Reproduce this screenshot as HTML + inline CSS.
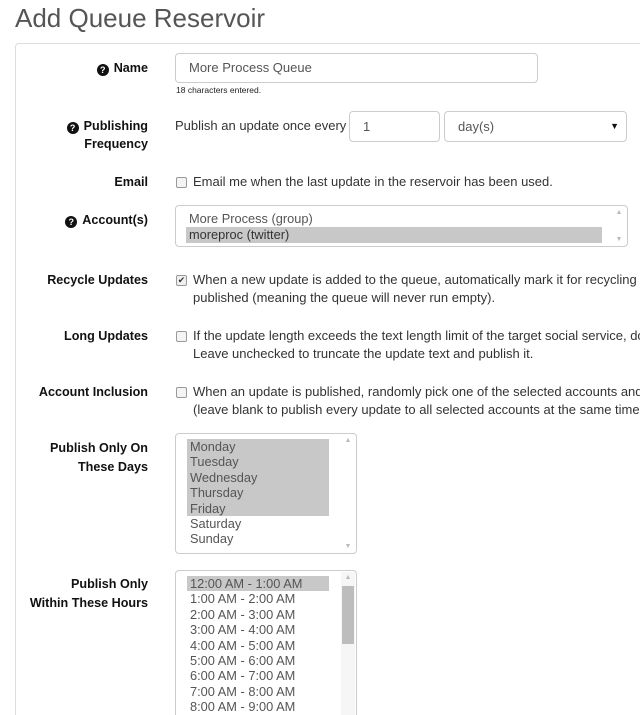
<!DOCTYPE html>
<html><head><style>
*{box-sizing:border-box;margin:0;padding:0}
html,body{width:640px;height:715px;overflow:hidden}
body{background:#fff;font-family:"Liberation Sans",Arial,sans-serif;color:#333;position:relative}
.a{position:absolute;white-space:nowrap}
h1{position:absolute;left:15px;top:3px;font-size:26px;font-weight:normal;color:#555}
.panel{position:absolute;left:15px;top:43px;width:625px;height:672px;border:1px solid #ddd;border-right:none;border-bottom:none;border-radius:4px 0 0 0}
.lbl{position:absolute;right:492px;font-weight:bold;font-size:12.6px;text-align:right;line-height:18px;color:#111;white-space:nowrap}
.q{display:inline-block;width:12px;height:12px;border-radius:50%;background:#111;color:#fff;font-size:9px;line-height:12px;text-align:center;vertical-align:-1px;margin-right:5px}
.inp{position:absolute;border:1px solid #ccc;border-radius:4px;font-size:13px;color:#555;padding-left:13px}
.t{font-size:13px;color:#333;line-height:18px}
.cb{position:absolute;width:11px;height:11px;border:1px solid #999;border-radius:2px;background:#f4f4f4}
.lb{position:absolute;border:1px solid #ccc;border-radius:4px;font-size:12.8px;color:#555;overflow:hidden}
.lb p{height:15.4px;line-height:15.4px;padding-left:3px;width:142px}
.s{background:#c8c8c8}
.sb{position:absolute;right:1px;top:1px;width:14px;bottom:1px;background:#fff;color:#bbb;font-size:7px;text-align:center}
.up{position:absolute;top:2px;left:0;width:14px}
.dn{position:absolute;bottom:2px;left:0;width:14px}
</style></head><body>
<h1>Add Queue Reservoir</h1>
<div class="panel"></div>

<div class="lbl" style="top:59px"><span class="q">?</span>Name</div>
<div class="inp" style="left:175px;top:53px;width:363px;height:30px;line-height:28px">More Process Queue</div>
<div class="a" style="left:176px;top:85px;font-size:8.5px;color:#222">18 characters entered.</div>

<div class="lbl" style="top:117px"><span class="q">?</span>Publishing<br>Frequency</div>
<div class="a t" style="left:175px;top:117px">Publish an update once every</div>
<div class="inp" style="left:349px;top:111px;width:91px;height:31px;line-height:29px">1</div>
<div class="inp" style="left:444px;top:111px;width:183px;height:31px;line-height:29px">day(s)<span style="position:absolute;right:7px;font-size:9px;color:#111">▼</span></div>

<div class="lbl" style="top:173px">Email</div>
<div class="cb" style="left:176px;top:177px"></div>
<div class="a t" style="left:193px;top:173px">Email me when the last update in the reservoir has been used.</div>

<div class="lbl" style="top:211px"><span class="q">?</span>Account(s)</div>
<div class="lb" style="left:175px;top:205px;width:453px;height:42px;padding:5px 0 0 10px">
<p style="width:416px;line-height:16px;height:16px">More Process (group)</p>
<p class="s" style="width:416px;line-height:16px;height:16px;color:#333">moreproc (twitter)</p>
<div class="sb"><span class="up">▲</span><span class="dn">▼</span></div>
</div>

<div class="lbl" style="top:271px">Recycle Updates</div>
<div class="cb" style="left:176px;top:275px;background:#f0f0f0;font-size:9px;line-height:9px;text-align:center;color:#333">✔</div>
<div class="a t" style="left:193px;top:271px">When a new update is added to the queue, automatically mark it for recycling<br>published (meaning the queue will never run empty).</div>

<div class="lbl" style="top:327px">Long Updates</div>
<div class="cb" style="left:176px;top:331px"></div>
<div class="a t" style="left:193px;top:327px">If the update length exceeds the text length limit of the target social service, do<br>Leave unchecked to truncate the update text and publish it.</div>

<div class="lbl" style="top:383px">Account Inclusion</div>
<div class="cb" style="left:176px;top:387px"></div>
<div class="a t" style="left:193px;top:383px">When an update is published, randomly pick one of the selected accounts and<br>(leave blank to publish every update to all selected accounts at the same time</div>

<div class="lbl" style="top:439px;line-height:19px">Publish Only On<br>These Days</div>
<div class="lb" style="left:175px;top:433px;width:182px;height:121px;padding:5px 0 0 11px">
<p class="s">Monday</p><p class="s">Tuesday</p><p class="s">Wednesday</p><p class="s">Thursday</p><p class="s">Friday</p><p>Saturday</p><p>Sunday</p>
<div class="sb"><span class="up">▲</span><span class="dn">▼</span></div>
</div>

<div class="lbl" style="top:575px;line-height:19px">Publish Only<br>Within These Hours</div>
<div class="lb" style="left:175px;top:570px;width:182px;height:145px;padding:5px 0 0 11px;border-bottom:none;border-radius:4px 4px 0 0">
<p class="s">12:00 AM - 1:00 AM</p><p>1:00 AM - 2:00 AM</p><p>2:00 AM - 3:00 AM</p><p>3:00 AM - 4:00 AM</p><p>4:00 AM - 5:00 AM</p><p>5:00 AM - 6:00 AM</p><p>6:00 AM - 7:00 AM</p><p>7:00 AM - 8:00 AM</p><p>8:00 AM - 9:00 AM</p>
<div class="sb" style="background:#f6f6f6;bottom:0"><span class="up">▲</span><span style="position:absolute;left:1px;top:14px;width:12px;height:58px;background:#bdbdbd"></span></div>
</div>
</body></html>
